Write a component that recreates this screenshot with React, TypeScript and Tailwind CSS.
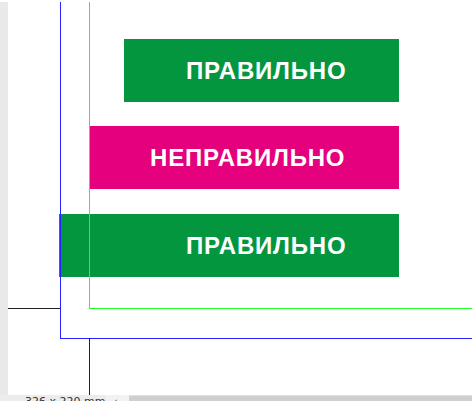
import React from "react";

export default function App() {
  const font = { fontFamily: '"Liberation Sans", Arial, sans-serif' };
  const label = "flex items-center text-white font-bold text-[24px] tracking-[0.8px] leading-none h-[63px]";
  return (
    <div className="w-[472px] h-[401px] overflow-hidden bg-white flex flex-col pt-[2px]" style={font}>
      <div className="flex-1 flex min-h-0">
        {/* left ruler strip */}
        <div className="w-[8px] bg-[#e9e9e9]" />

        {/* canvas */}
        <div className="relative flex-1">
          <div className="flex flex-col pt-[37px] gap-[24px]">
            <div className={`${label} ml-[116px] w-[275px] bg-[#03963f] pl-[62px]`}>ПРАВИЛЬНО</div>
            <div className={`${label} ml-[82px] w-[309px] bg-[#e5007d] pl-[60px]`}>НЕПРАВИЛЬНО</div>
            <div className={`${label} ml-[51px] mt-[1px] w-[340px] bg-[#03963f] pl-[127px]`}>ПРАВИЛЬНО</div>
          </div>

          {/* guide frames drawn over the artwork */}
          <div className="absolute left-[52px] top-0 right-0 h-[337px] border-l-[1.5px] border-b-[1.5px] border-[#2222ff]" />
          <div className="absolute left-[81px] top-0 right-0 h-[307px] border-l border-b border-[#22ff22]" />
          <div className="absolute left-0 top-[306px] w-[52px] h-px bg-[#222222]" />
          <div className="absolute left-[81px] top-[336px] w-px bottom-0 bg-[#222222]" />
        </div>
      </div>

      {/* bottom status bar */}
      <div className="h-[6px] flex overflow-hidden">
        <div className="w-[106px] bg-[#ececec] pl-[25px] pt-[1px]">
          <span className="block text-[11px] leading-none text-[#333] whitespace-nowrap" style={{ fontFamily: '"DejaVu Sans", sans-serif' }}>
            326 x 220 mm
          </span>
        </div>
        <div className="w-[23px] bg-[#f2f2f2] pl-[8px] pt-[1px]">
          <span className="block text-[11px] leading-none text-[#444]">‹</span>
        </div>
        <div className="flex-1 bg-[#cfcfcf] border-t border-[#e0e0e0]" />
      </div>
    </div>
  );
}
